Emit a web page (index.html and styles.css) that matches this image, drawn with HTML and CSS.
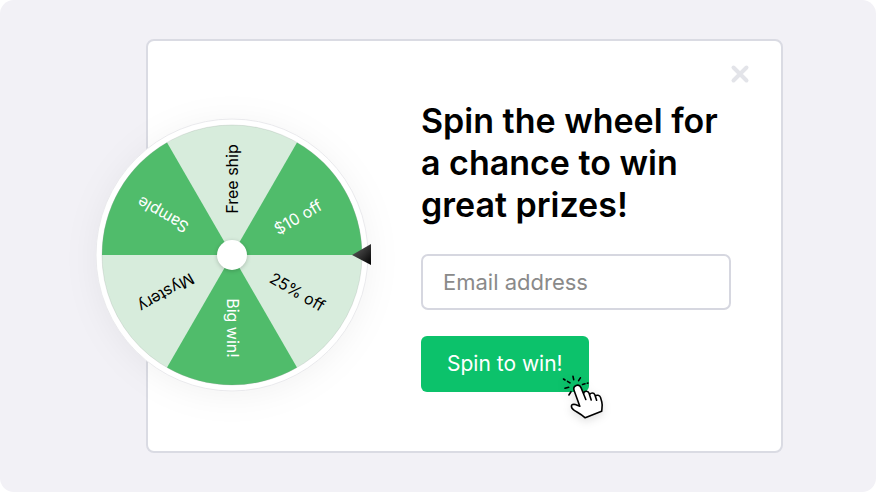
FILE: index.html
```html
<!DOCTYPE html>
<html lang="en">
<head>
<meta charset="utf-8">
<meta name="viewport" content="width=device-width, initial-scale=1">
<title>Spin to win</title>
<link rel="stylesheet" href="styles.css">
</head>
<body>
<main class="stage">
  <section class="card">
    <button class="close" type="button" aria-label="Close">
      <svg width="20" height="20" viewBox="0 0 20 20"><path d="M3.5 3.5 16.5 16.5M16.5 3.5 3.5 16.5"/></svg>
    </button>
    <div class="wheel-area">
      <svg class="wheel" width="280" height="280" viewBox="-140 -140 280 280" role="img" aria-label="Prize wheel">
        <defs>
          <linearGradient id="pointer" x1="0" y1="0" x2="1" y2="1">
            <stop offset="0" stop-color="#666"/>
            <stop offset="1" stop-color="#000"/>
          </linearGradient>
        </defs>
        <circle class="rim" r="136"/>
        <circle class="slice-light" r="130"/>
        <g class="slice-dark">
          <path d="M0 0H130A130 130 0 0 0 65 -112.6Z"/>
          <path d="M0 0H130A130 130 0 0 0 65 -112.6Z" transform="rotate(120)"/>
          <path d="M0 0H130A130 130 0 0 0 65 -112.6Z" transform="rotate(240)"/>
        </g>
        <circle class="edge" r="130"/>
        <g class="labels">
          <text x="76" y="6" transform="rotate(-90)">Free ship</text>
          <text class="on-dark" x="76" y="6" transform="rotate(-30)">$10 off</text>
          <text x="75" y="5" transform="rotate(30)">25% off</text>
          <text class="on-dark" x="73" y="5" transform="rotate(90)">Big win!</text>
          <text x="76" y="6" transform="rotate(150)">Mystery</text>
          <text class="on-dark" x="80" y="6" transform="rotate(210)">Sample</text>
        </g>
        <circle class="hub" r="15"/>
        <path fill="url(#pointer)" d="M120 0 139 -11V10Z"/>
      </svg>
    </div>
    <form class="offer">
      <h1>Spin the wheel for a chance to win great prizes!</h1>
      <input type="email" placeholder="Email address" aria-label="Email address">
      <div class="action">
        <button class="spin" type="button">Spin to win!</button>
        <svg class="cursor" width="44" height="46" viewBox="0 0 44 46" aria-hidden="true">
          <path class="hand" d="M16.800 31.200 11.100 15.500C9.400 10.500 16 8 18 12.600L20.600 19C20.800 15.500 25.200 15.300 26.100 18.300L26.600 20C27.300 17.300 31 17.500 31.800 19.800L32.300 21.300C33.500 19.500 36.800 20 37.500 22.400L38.800 27C39.800 30.500 39 33 38.600 36.300L22.200 42.800C18.500 39.300 14.500 37.500 11.200 35.300C7 32.500 7.700 28.500 12.300 29.500L16.800 31.200M20.600 19 22.800 24.500M26.600 20 28.200 25M32.300 21.300 33.600 25.300"/>
          <path class="rays" d="M.5 4 2 5M4.500 6.300 7 7.900M10 1.300 10.700 4.700M17.400 2.800 15.600 5.700M2 13.300 5.700 12.300M19.500 9.500 22 8.800M24.300 8.200 25 8M8 16.700 5.900 20"/>
        </svg>
      </div>
    </form>
  </section>
</main>
</body>
</html>
```
FILE: styles.css
```css
* { box-sizing: border-box; }

body {
  margin: 0;
  background: #fff;
  font-family: Inter, "Liberation Sans", sans-serif;
}

.stage {
  min-height: 100vh;
  padding: 39px 93px 39px 146px;
  display: flex;
  border-radius: 14px;
  background: #f2f1f6;
}

.card {
  position: relative;
  flex: 1;
  display: grid;
  grid-template-columns: 1fr 310px;
  padding-right: 50px;
  border: 2px solid #dadbe3;
  border-radius: 8px;
  background: #fff;
}

.close {
  position: absolute;
  top: 23px;
  right: 31px;
  padding: 0;
  border: 0;
  background: none;
  line-height: 0;
}

.close path {
  stroke: #e3e4e9;
  stroke-width: 4;
  stroke-linecap: round;
}

.wheel-area {
  padding-top: 74px;
}

.wheel {
  display: block;
  margin-left: -56px;
  overflow: visible;
}

.rim {
  fill: #fff;
  stroke: #e9e9ec;
  stroke-width: 1;
  filter: drop-shadow(0 4px 16px rgba(0, 0, 0, .05));
}

.slice-light { fill: #d7ecdc; }
.slice-dark { fill: #50bc6b; }

.edge {
  fill: none;
  stroke: rgba(140, 150, 145, .22);
  stroke-width: 1;
}

.labels {
  font-size: 16px;
  text-anchor: middle;
}

.on-dark { fill: #fff; }

.hub {
  fill: #fff;
  filter: drop-shadow(0 1px 2px rgba(0, 0, 0, .2));
}

.offer {
  padding-top: 59px;
}

h1 {
  margin: 0 0 28px;
  font-size: 34px;
  line-height: 42px;
  font-weight: 600;
  color: #000;
}

input {
  display: block;
  width: 100%;
  height: 56px;
  margin-bottom: 26px;
  padding: 0 20px;
  border: 2px solid #d6d7e0;
  border-radius: 7px;
  background: #fff;
  font: 400 22px/28px Inter, "Liberation Sans", sans-serif;
}

input::placeholder {
  color: #8a8a8a;
  opacity: 1;
}

.action {
  position: relative;
  width: fit-content;
}

.spin {
  display: block;
  height: 56px;
  padding: 0 26px;
  border: 0;
  border-radius: 6px;
  background: #0cc26b;
  color: #fff;
  font: 400 21px/28px Inter, "Liberation Sans", sans-serif;
}

.cursor {
  position: absolute;
  right: -18px;
  bottom: -29px;
  overflow: visible;
  filter: drop-shadow(0 3px 4px rgba(0, 0, 0, .12));
}

.hand {
  fill: #fff;
  stroke: #000;
  stroke-width: 1.6;
  stroke-linejoin: round;
  stroke-linecap: round;
}

.rays {
  fill: none;
  stroke: #000;
  stroke-width: 1.6;
  stroke-linecap: round;
}
```
